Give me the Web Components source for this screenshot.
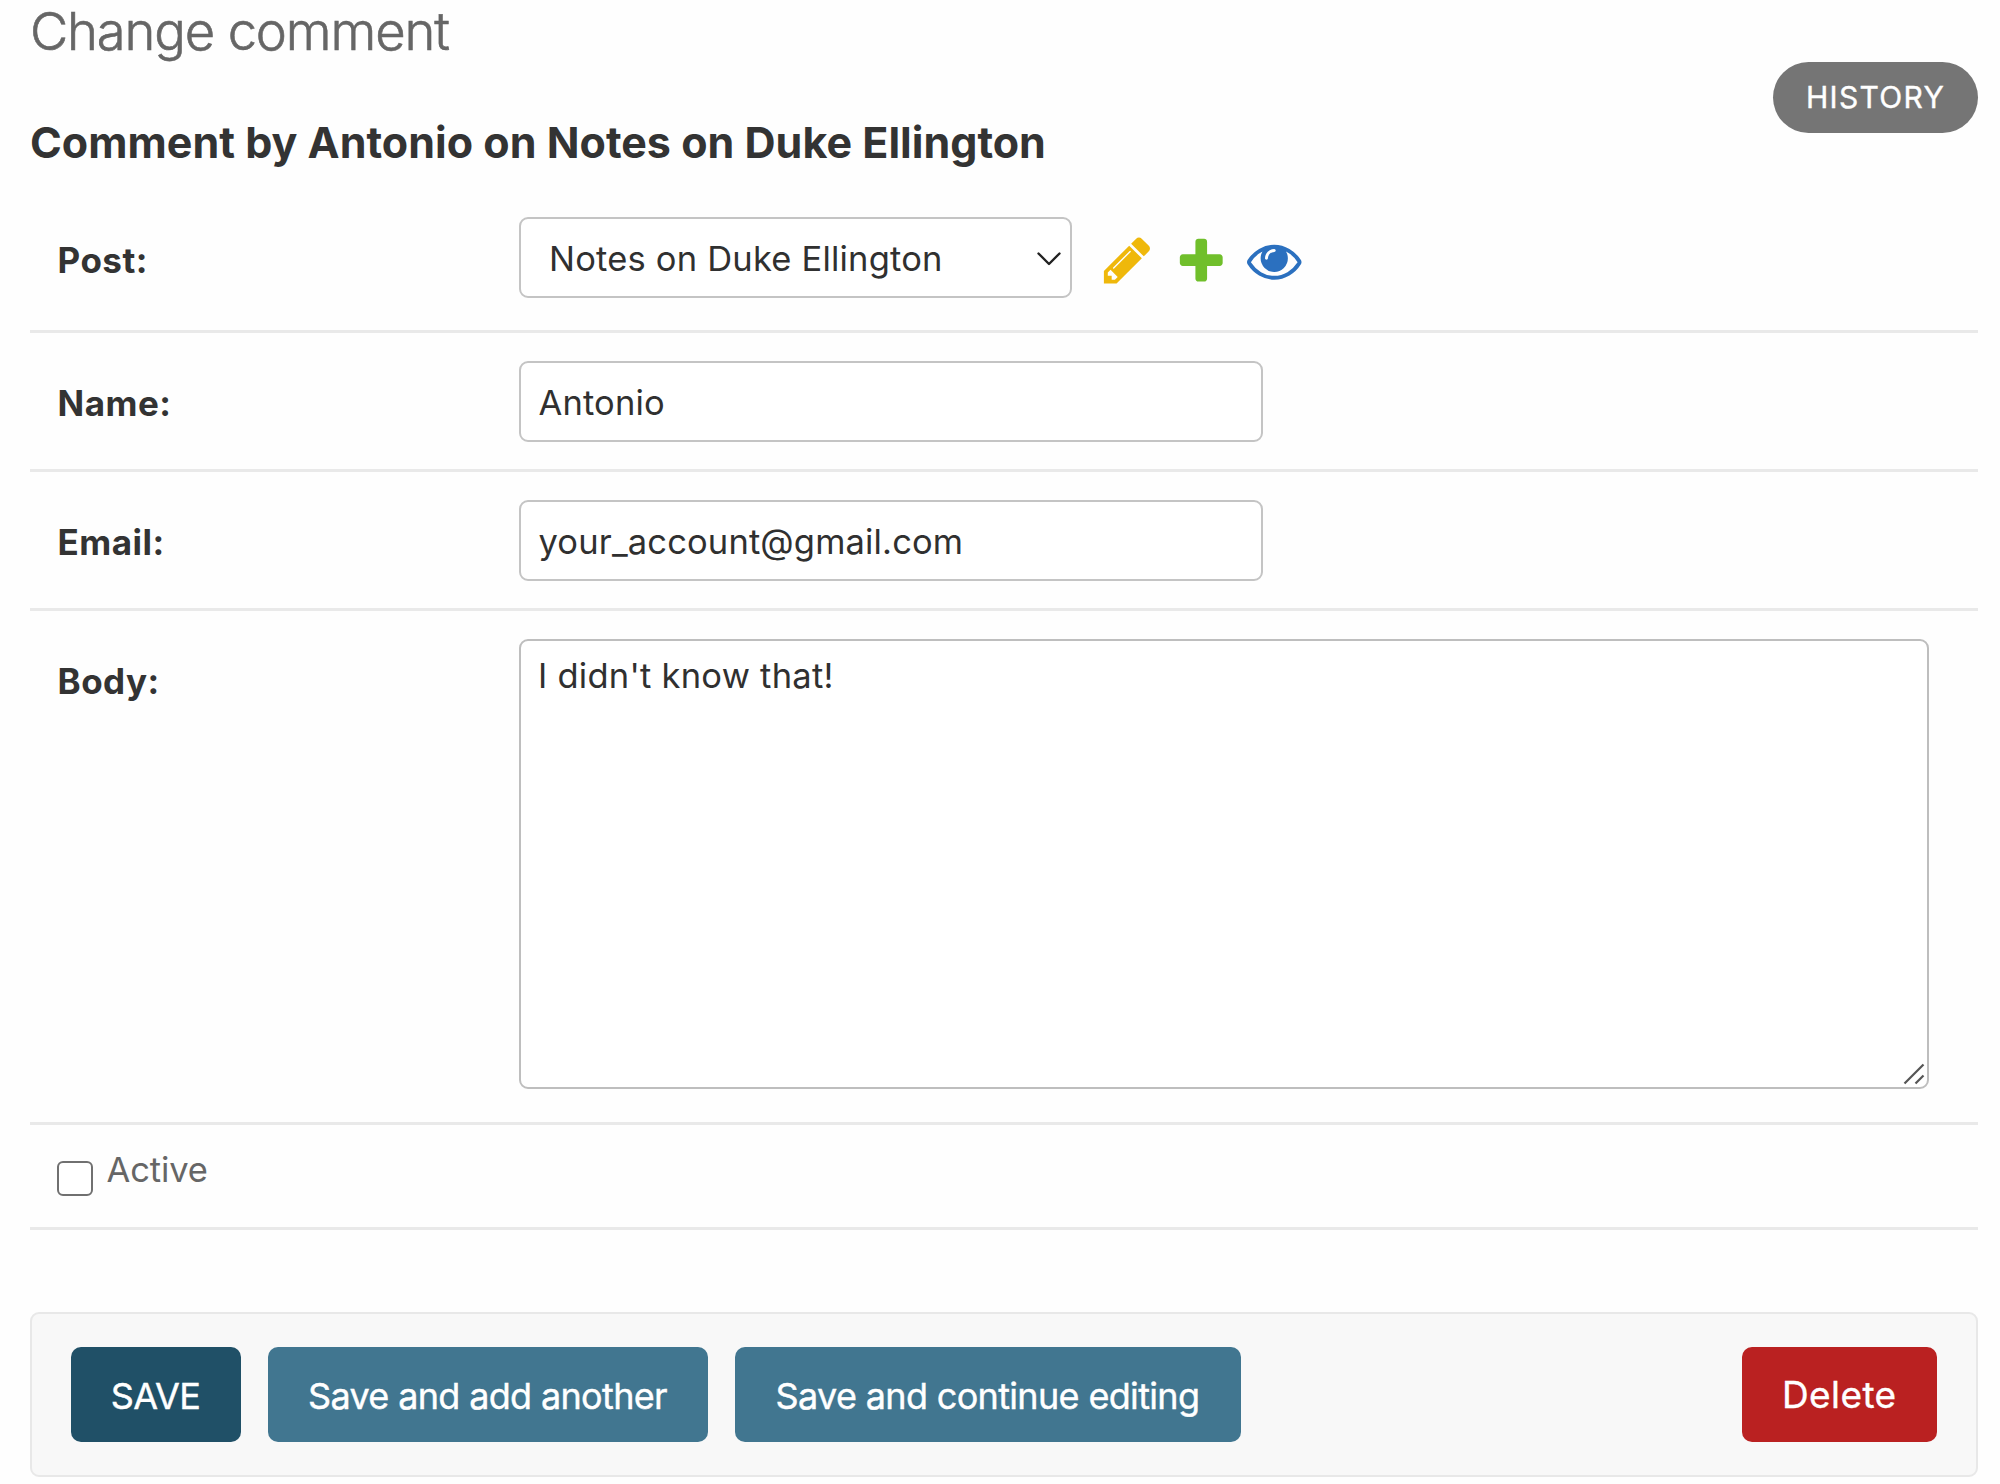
<!DOCTYPE html>
<html lang="en">
<head>
<meta charset="utf-8">
<title>Change comment</title>
<style>
html, body { margin: 0; background: #fefefe; }
body { font-family: Inter, Roboto, "Liberation Sans", sans-serif; color: #303030; font-size: 34.5px; }
</style>
</head>
<body>
<comment-change-form></comment-change-form>

<script>
const define = (name, html, setup) => {
  const template = document.createElement('template');
  template.innerHTML = html;
  customElements.define(name, class extends HTMLElement {
    constructor() {
      super();
      this.attachShadow({ mode: 'open' }).append(template.content.cloneNode(true));
    }
    connectedCallback() { if (setup) setup(this); }
  });
};

define('history-link', `
<style>
:host { display: block; flex: none; }
a { display: flex; align-items: center; justify-content: center; box-sizing: border-box; width: 205px; height: 71px; padding-bottom: 1px;
    border-radius: 36px; background: #757575; color: #fff; font-size: 30px; -webkit-text-stroke: .4px; letter-spacing: 1.32px; text-decoration: none; }
</style>
<a href="#"><slot></slot></a>`);

define('page-heading', `
<style>
:host { display: flex; justify-content: space-between; align-items: flex-start; height: 169px; }
h1 { margin: 0; font-weight: 300; font-size: 52.5px; line-height: 63px; letter-spacing: -1.15px; -webkit-text-stroke: .6px; color: #666; }
h2 { margin: 53px 0 0; font-weight: 700; font-size: 43px; line-height: 52px; letter-spacing: .02px; color: #333; }
history-link { margin-top: 62px; }
</style>
<div>
  <h1><slot name="title"></slot></h1>
  <h2><slot name="subtitle"></slot></h2>
</div>
<history-link><slot name="tool"></slot></history-link>`);

define('form-row', `
<style>
:host { display: flex; align-items: flex-start; box-sizing: border-box; padding: 28px 0 0 27.5px; height: 139px;
        border-bottom: 3px solid #e9e9e9; }
:host([kind="related"]) { height: 164px; padding-top: 48px; }
:host([kind="long"]) { height: 514px; }
label { flex: none; width: 461.5px; margin-top: 21px; font-weight: 700; font-size: 35px; line-height: 42px;
        letter-spacing: .5px; color: #333; }
:host([kind="related"]) label { margin-top: 22px; }
.control { display: flex; align-items: flex-start; }
</style>
<label><slot name="label"></slot></label>
<div class="control"><slot></slot></div>`);

define('text-field', `
<style>
:host { display: block; }
div { display: flex; align-items: center; box-sizing: border-box; width: 744px; height: 81px; border: 2px solid #c4c4c4;
      border-radius: 9px; padding: 2px 18px 0 17.5px; background: #fff; letter-spacing: .15px; outline: none; }
</style>
<div role="textbox"><slot></slot></div>`);

define('text-area', `
<style>
:host { display: block; }
div { display: flex; flex-direction: column; justify-content: space-between; box-sizing: border-box; width: 1410px; height: 450px;
      border: 2px solid #bebebe; border-radius: 9px; padding: 14px 0 0 17px; background: #fff; line-height: 42px; letter-spacing: .25px; }
svg { align-self: flex-end; display: block; }
</style>
<div role="textbox" aria-multiline="true">
  <span><slot></slot></span>
  <svg width="24" height="24" viewBox="0 0 24 24" fill="none" stroke="#555" stroke-width="2.2"><path d="M1.5 20.500 20.500 1.500M12.500 20.500 20.500 12.500"/></svg>
</div>`);

define('select-box', `
<style>
:host { display: block; }
div { display: flex; align-items: center; justify-content: space-between; box-sizing: border-box; width: 553px; height: 81px;
      border: 2px solid #c4c4c4; border-radius: 9px; padding: 2px 8px 0 28px; background: #fff; letter-spacing: .2px; }
svg { display: block; }
</style>
<div role="combobox">
  <span><slot></slot></span>
  <svg width="26" height="16" viewBox="0 0 26 16" fill="none" stroke="#222" stroke-width="2.400" stroke-linecap="round" stroke-linejoin="round"><path d="M2.500 2.500 13 13 23.500 2.500"/></svg>
</div>`);

const ICONS = {
  change: ['#efb80b', 'M491 1536l91-91-235-235-91 91v107h128v128h107zm523-928q0-22-22-22-10 0-17 7l-542 542q-7 7-7 17 0 22 22 22 10 0 17-7l542-542q7-7 7-17zm-54-192l416 416-832 832h-416v-416zm683 96q0 53-37 90l-166 166-416-416 166-165q36-38 90-38 53 0 91 38l235 234q37 39 37 91z'],
  add: ['#70bf2b', 'M1600 796v192q0 40-28 68t-68 28h-416v416q0 40-28 68t-68 28h-192q-40 0-68-28t-28-68v-416h-416q-40 0-68-28t-28-68v-192q0-40 28-68t68-28h416v-416q0-40 28-68t68-28h192q40 0 68 28t28 68v416h416q40 0 68 28t28 68z'],
  view: ['#2b70bf', 'M1664 960q-152-236-381-353 61 104 61 225 0 185-131.5 316.5t-316.5 131.500-316.500-131.500-131.500-316.500q0-121 61-225-229 117-381 353 133 205 333.500 326.500t434.500 121.500 434.500-121.500 333.500-326.500zm-720-384q0-20-14-34t-34-14q-125 0-214.500 89.500t-89.500 214.500q0 20 14 34t34 14 34-14 14-34q0-86 61-147t147-61q20 0 34-14t14-34zm848 384q0 34-20 69-140 230-376.500 368.500t-499.500 138.500-499.500-139-376.500-368q-20-35-20-69t20-69q140-229 376.500-368t499.500-139 499.500 139 376.500 368q20 35 20 69z'],
};
define('related-icon', `
<style>
:host { display: block; width: 54.5px; height: 54.5px; }
svg { display: block; width: 100%; height: 100%; }
</style>
<svg viewBox="0 0 1792 1792"><path/></svg>`, el => {
  const [fill, d] = ICONS[el.getAttribute('name')];
  const path = el.shadowRoot.querySelector('path');
  path.setAttribute('fill', fill);
  path.setAttribute('d', d);
});

define('related-links', `
<style>:host { display: flex; gap: 19px; margin: 16px 0 0 28px; }</style>
<related-icon name="change"></related-icon>
<related-icon name="add"></related-icon>
<related-icon name="view"></related-icon>`);

define('checkbox-row', `
<style>
:host { display: flex; align-items: flex-start; box-sizing: border-box; height: 105px; padding-left: 27px; border-bottom: 3px solid #e9e9e9; }
i { box-sizing: border-box; width: 35.500px; height: 35.500px; margin-top: 35.500px; border: 2px solid #707070; border-radius: 6px; background: #fff; }
label { margin: 24px 0 0 14px; line-height: 42px; letter-spacing: -.1px; color: #666; }
</style>
<i role="checkbox"></i><label><slot></slot></label>`);

define('submit-button', `
<style>
:host { display: block; }
button { display: block; width: 100%; height: 95px; margin: 0; border: 0; border-radius: 10px; padding: 2px 0 0 0; font: inherit; font-size: 36px;
         letter-spacing: -.66px; -webkit-text-stroke: .4px; color: #fff; background: #417690; }
:host([kind="default"]) { width: 170px; }
:host([kind="default"]) button { background: #205067; }
:host([kind="another"]) { width: 440px; }
:host([kind="continue"]) { width: 506px; }
:host([kind="delete"]) { width: 195.500px; margin-left: auto; }
:host([kind="delete"]) button { background: #ba2121; font-size: 37px; letter-spacing: .4px; padding-top: 0; }
</style>
<button type="button"><slot></slot></button>`);

define('submit-row', `
<style>
:host { display: flex; gap: 27px; box-sizing: border-box; height: 165px; margin-top: 82px; padding: 33px 39px 0 38.500px; background: #f8f8f8;
        border: 2px solid #e8e8e8; border-radius: 9px; }
</style>
<slot></slot>`);

define('comment-change-form', `
<style>:host { display: block; padding: 0 22px 0 30px; }</style>
<page-heading>
  <span slot="title">Change comment</span>
  <span slot="subtitle">Comment by Antonio on Notes on Duke Ellington</span>
  <span slot="tool">HISTORY</span>
</page-heading>
<form-row kind="related"><span slot="label">Post:</span><select-box>Notes on Duke Ellington</select-box><related-links></related-links></form-row>
<form-row><span slot="label">Name:</span><text-field>Antonio</text-field></form-row>
<form-row><span slot="label">Email:</span><text-field>your_account@gmail.com</text-field></form-row>
<form-row kind="long"><span slot="label">Body:</span><text-area>I didn't know that!</text-area></form-row>
<checkbox-row>Active</checkbox-row>
<submit-row>
  <submit-button kind="default">SAVE</submit-button>
  <submit-button kind="another">Save and add another</submit-button>
  <submit-button kind="continue">Save and continue editing</submit-button>
  <submit-button kind="delete">Delete</submit-button>
</submit-row>`);
</script>
</body>
</html>
